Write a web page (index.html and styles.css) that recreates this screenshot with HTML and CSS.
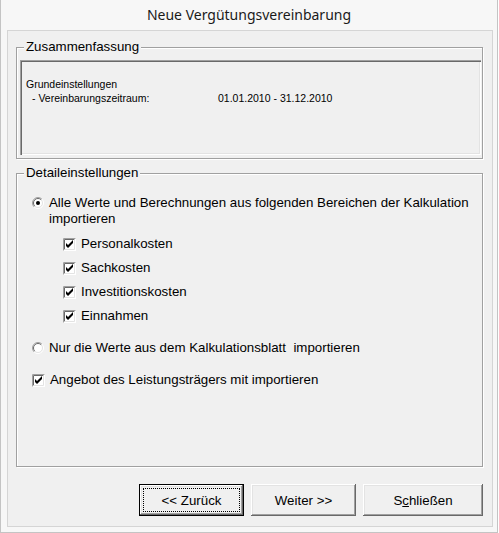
FILE: index.html
```html
<!DOCTYPE html>
<html lang="de">
	<head>
		<meta charset="UTF-8">
		<title>Neue Vergütungsvereinbarung</title>
		<link rel="stylesheet" href="styles.css">
	</head>
	<body>
		<div class="dialog">
			<div class="caption">Neue Vergütungsvereinbarung</div>

			<div class="panel">
				<fieldset class="group summary">
					<legend>Zusammenfassung</legend>
					<div class="summary-box">
						<div>Grundeinstellungen</div>
						<div class="summary-row">
							<span class="summary-key">- Vereinbarungszeitraum:</span>
							<span>01.01.2010 - 31.12.2010</span>
						</div>
					</div>
				</fieldset>

				<fieldset class="group details">
					<legend>Detaileinstellungen</legend>

					<label class="option option-multi">
						<svg class="radio" width="12" height="12" viewBox="0 0 12 12">
							<circle cx="6" cy="6" r="5" fill="#fff"/>
							<path d="M2.1 9.9A5.5 5.5 0 0 1 9.9 2.1" stroke="#a0a0a0" fill="none"/>
							<path d="M9.9 2.1A5.5 5.5 0 0 1 2.1 9.9" stroke="#ffffff" fill="none"/>
							<path d="M2.8 9.2A4.5 4.5 0 0 1 9.2 2.8" stroke="#696969" fill="none"/>
							<path d="M9.2 2.8A4.5 4.5 0 0 1 2.8 9.2" stroke="#e3e3e3" fill="none"/>
							<circle cx="6" cy="6" r="2" fill="#000"/>
						</svg>
						<span>Alle Werte und Berechnungen aus folgenden Bereichen der Kalkulation importieren</span>
					</label>

					<div class="sublist">
						<label class="option">
							<svg class="check" width="13" height="13" viewBox="0 0 13 13">
								<rect x="0" y="0" width="13" height="13" fill="#fff"/>
								<path d="M0.5 12.5V0.5H12.5" stroke="#a0a0a0" fill="none"/>
								<path d="M1.5 11.5V1.5H11.5" stroke="#696969" fill="none"/>
								<path d="M1.5 11.5H11.5V1.5" stroke="#e3e3e3" fill="none"/>
								<path d="M3 5v3l2 2 5-5V2L5 7z" fill="#000"/>
							</svg>
							<span>Personalkosten</span>
						</label>
						<label class="option">
							<svg class="check" width="13" height="13" viewBox="0 0 13 13">
								<rect x="0" y="0" width="13" height="13" fill="#fff"/>
								<path d="M0.5 12.5V0.5H12.5" stroke="#a0a0a0" fill="none"/>
								<path d="M1.5 11.5V1.5H11.5" stroke="#696969" fill="none"/>
								<path d="M1.5 11.5H11.5V1.5" stroke="#e3e3e3" fill="none"/>
								<path d="M3 5v3l2 2 5-5V2L5 7z" fill="#000"/>
							</svg>
							<span>Sachkosten</span>
						</label>
						<label class="option">
							<svg class="check" width="13" height="13" viewBox="0 0 13 13">
								<rect x="0" y="0" width="13" height="13" fill="#fff"/>
								<path d="M0.5 12.5V0.5H12.5" stroke="#a0a0a0" fill="none"/>
								<path d="M1.5 11.5V1.5H11.5" stroke="#696969" fill="none"/>
								<path d="M1.5 11.5H11.5V1.5" stroke="#e3e3e3" fill="none"/>
								<path d="M3 5v3l2 2 5-5V2L5 7z" fill="#000"/>
							</svg>
							<span>Investitionskosten</span>
						</label>
						<label class="option">
							<svg class="check" width="13" height="13" viewBox="0 0 13 13">
								<rect x="0" y="0" width="13" height="13" fill="#fff"/>
								<path d="M0.5 12.5V0.5H12.5" stroke="#a0a0a0" fill="none"/>
								<path d="M1.5 11.5V1.5H11.5" stroke="#696969" fill="none"/>
								<path d="M1.5 11.5H11.5V1.5" stroke="#e3e3e3" fill="none"/>
								<path d="M3 5v3l2 2 5-5V2L5 7z" fill="#000"/>
							</svg>
							<span>Einnahmen</span>
						</label>
					</div>

					<label class="option spaced">
						<svg class="radio" width="12" height="12" viewBox="0 0 12 12">
							<circle cx="6" cy="6" r="5" fill="#fff"/>
							<path d="M2.1 9.9A5.5 5.5 0 0 1 9.9 2.1" stroke="#a0a0a0" fill="none"/>
							<path d="M9.9 2.1A5.5 5.5 0 0 1 2.1 9.9" stroke="#ffffff" fill="none"/>
							<path d="M2.8 9.2A4.5 4.5 0 0 1 9.2 2.8" stroke="#696969" fill="none"/>
							<path d="M9.2 2.8A4.5 4.5 0 0 1 2.8 9.2" stroke="#e3e3e3" fill="none"/>
						</svg>
						<span>Nur die Werte aus dem Kalkulationsblatt &nbsp;importieren</span>
					</label>

					<label class="option spaced">
						<svg class="check" width="13" height="13" viewBox="0 0 13 13">
							<rect x="0" y="0" width="13" height="13" fill="#fff"/>
							<path d="M0.5 12.5V0.5H12.5" stroke="#a0a0a0" fill="none"/>
							<path d="M1.5 11.5V1.5H11.5" stroke="#696969" fill="none"/>
							<path d="M1.5 11.5H11.5V1.5" stroke="#e3e3e3" fill="none"/>
							<path d="M3 5v3l2 2 5-5V2L5 7z" fill="#000"/>
						</svg>
						<span>Angebot des Leistungsträgers mit importieren</span>
					</label>
				</fieldset>

				<div class="button-row">
					<button type="button" class="default">&lt;&lt; Zurück</button>
					<button type="button">Weiter &gt;&gt;</button>
					<button type="button" class="wide">S<u>c</u>hließen</button>
				</div>
			</div>
		</div>
	</body>
</html>
```

FILE: styles.css
```css
body {
    margin: 0;
    background-color: #ffffff;
    font-family: "Liberation Sans", Arial, sans-serif;
    color: #000000;
}

.dialog {
    width: 498px;
    height: 533px;
    box-sizing: border-box;
    border: 1px solid #c4c4c4;
    border-top: none;
    background-color: #f7f7f7;
    display: flex;
    flex-direction: column;
}

.caption {
    height: 30px;
    line-height: 29px;
    text-align: center;
    font-family: "Noto Sans", "Open Sans", sans-serif;
    font-size: 14px;
    color: #1a1a1a;
}

.panel {
    width: 486px;
    height: 497px;
    box-sizing: border-box;
    margin-left: 6px;
    border: 1px solid #d5d5d5;
    background-color: #f0f0f0;
    padding: 0 9px 10px 8px;
    display: flex;
    flex-direction: column;
}

.group {
    margin: 0;
    min-width: 0;
    border: 1px solid #a0a0a0;
    box-shadow: 1px 1px 0 #ffffff, inset 1px 1px 0 #ffffff;
    font-size: 13.3px;
}

.group legend {
    padding: 0 2px;
    line-height: 16px;
    background-color: #f0f0f0;
}

.summary {
    margin-top: 8px;
    padding: 5px 1px 3px 3px;
}

.summary legend {
    margin-left: 4px;
}

.summary-box {
    height: 95px;
    box-sizing: border-box;
    padding: 17px 6px 0;
    font-size: 10.5px;
    line-height: 14px;
    box-shadow: inset 1px 1px 0 #a0a0a0, inset 2px 2px 0 #696969,
        inset -1px -1px 0 #ffffff, inset -2px -2px 0 #e3e3e3;
}

.summary-row {
    display: flex;
    padding-left: 6px;
}

.summary-key {
    width: 186px;
}

.details {
    flex: 1;
    margin-top: 6px;
    padding: 14px 8px 0 15px;
}

.details legend {
    margin-left: -8px;
}

.option {
    display: flex;
    align-items: center;
    height: 24px;
    line-height: 16px;
}

.option-multi {
    height: auto;
    align-items: flex-start;
}

.option-multi .radio {
    margin-top: 2px;
}

.radio {
    flex: none;
    margin-right: 5px;
}

.check {
    flex: none;
    margin-right: 5px;
}

.sublist {
    margin-top: 5px;
    padding-left: 31px;
}

.spaced {
    margin-top: 8px;
}

.button-row {
    display: flex;
    justify-content: flex-end;
    gap: 7px;
    margin-top: 17px;
}

button {
    width: 105px;
    height: 32px;
    padding: 0;
    border: none;
    border-radius: 0;
    background-color: #f0f0f0;
    font-family: inherit;
    font-size: 13.3px;
    color: #000000;
    box-shadow: inset -1px -1px 0 #696969, inset 1px 1px 0 #ffffff,
        inset -2px -2px 0 #a0a0a0, inset 2px 2px 0 #e3e3e3;
}

button.default {
    border: 1px solid #000000;
    outline: 1px dotted #000000;
    outline-offset: -5px;
}

button.wide {
    width: 120px;
}
```
